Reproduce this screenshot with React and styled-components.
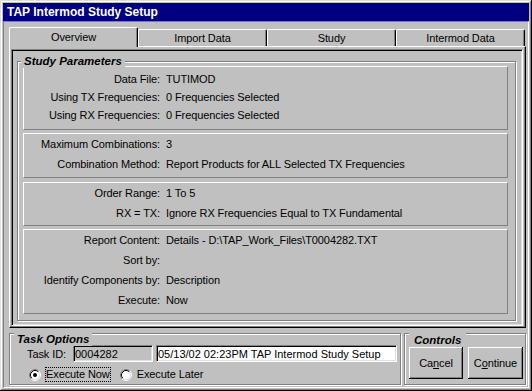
import React from "react";
import styled, { createGlobalStyle } from "styled-components";

const GlobalStyle = createGlobalStyle`
  html, body {
    margin: 0;
    padding: 0;
    background: #c0c0c0;
  }
  body {
    font-family: "Liberation Sans", Arial, sans-serif;
    font-size: 11px;
    color: #000;
  }
  * {
    box-sizing: border-box;
  }
`;

const Window = styled.div`
  width: 532px;
  height: 391px;
  padding: 3px;
  background: #c0c0c0;
  box-shadow: inset -1px -1px #000, inset 1px 1px #dfdfdf,
    inset -2px -2px #808080, inset 2px 2px #fff;
  display: flex;
  flex-direction: column;
`;

const TitleBar = styled.div`
  flex: none;
  height: 18px;
  padding-left: 4px;
  background: #000080;
  color: #fff;
  font-size: 12px;
  font-weight: bold;
  line-height: 18px;
  white-space: nowrap;
`;

const Body = styled.div`
  flex: 1;
  display: flex;
  flex-direction: column;
  border: 1px solid;
  border-color: #808080 #fff #fff #808080;
  padding: 5px 2px 2px 5px;
`;

const TabStrip = styled.div`
  position: relative;
  z-index: 1;
  display: flex;
  align-items: flex-end;
  height: 19px;
  margin-right: 1px;
`;

const Tab = styled.div`
  flex: 1;
  height: ${(p) => (p.$active ? 20 : 17)}px;
  margin-bottom: ${(p) => (p.$active ? -1 : 0)}px;
  border-top: 1px solid #fff;
  border-left: 1px solid #fff;
  border-right: 1px solid #000;
  border-radius: 2px 2px 0 0;
  box-shadow: inset -1px 0 #808080;
  background: #c0c0c0;
  text-align: center;
  line-height: ${(p) => (p.$active ? 19 : 16)}px;
  letter-spacing: -0.1px;
`;

const Page = styled.div`
  height: 282px;
  border: 1px solid;
  border-color: #fff #000 #000 #fff;
  box-shadow: inset -1px -1px #808080;
  padding: 2px 2px 1px 1px;
`;

const Panel = styled.div`
  height: 100%;
  border: 1px solid;
  border-color: #808080 #fff #fff #808080;
  box-shadow: inset 1px 1px #000, inset -1px -1px #dfdfdf;
  padding: 11px 6px 4px 5px;
`;

const Group = styled.div`
  position: relative;
  border: 1px solid #808080;
  box-shadow: inset 1px 1px #fff, 1px 1px #fff;
`;

const StudyGroup = styled(Group)`
  display: flex;
  flex-direction: column;
  gap: 3px;
  padding: 4px 7px 6px 5px;
`;

const Legend = styled.span`
  position: absolute;
  left: ${(p) => p.$x}px;
  top: ${(p) => p.$y}px;
  padding: 0 ${(p) => p.$pad ?? 3}px;
  background: #c0c0c0;
  font-size: 11.5px;
  font-style: italic;
  font-weight: bold;
  line-height: 14px;
  white-space: nowrap;
`;

const Section = styled.div`
  display: grid;
  grid-template-columns: 136px 1fr;
  grid-auto-rows: ${(p) => p.$rowH}px;
  column-gap: 6px;
  align-items: center;
  margin-top: ${(p) => p.$mt ?? 0}px;
  padding: ${(p) => p.$pt}px 0 ${(p) => p.$pb}px;
  border: 1px solid;
  border-color: #fff #808080 #808080 #fff;
  letter-spacing: -0.1px;
  white-space: nowrap;
`;

const FieldLabel = styled.div`
  text-align: right;
`;

const FieldValue = styled.div``;

const BottomRow = styled.div`
  display: flex;
  gap: 3px;
  height: 52px;
  margin-top: 5px;
`;

const TaskGroup = styled(Group)`
  width: 392px;
  padding: 11px 3px 1px 17px;
  display: flex;
  flex-direction: column;
  gap: 4px;
`;

const ControlsGroup = styled(Group)`
  flex: 1;
  display: flex;
  align-items: flex-start;
  gap: 5px;
  padding: 13px 2px 5px 4px;
`;

const TaskRow = styled.div`
  display: flex;
  align-items: center;
  height: 17px;
`;

const TaskLabel = styled.span`
  width: 46px;
  letter-spacing: -0.1px;
`;

const TextField = styled.input`
  width: ${(p) => p.$w}px;
  height: 17px;
  margin: 0 ${(p) => p.$mr ?? 0}px 0 0;
  padding: 0 0 0 1px;
  border: 1px solid;
  border-color: #808080 #fff #fff #808080;
  box-shadow: inset 1px 1px #000, inset -1px -1px #dfdfdf;
  background: ${(p) => (p.$disabled ? "#c0c0c0" : "#fff")};
  font-family: "Liberation Sans", Arial, sans-serif;
  font-size: 11px;
  color: #000;
  outline: none;
`;

const RadioRow = styled.div`
  display: flex;
  align-items: center;
  height: 17px;
  padding-left: 2px;
`;

const RadioOption = styled.label`
  display: inline-flex;
  align-items: center;
  gap: 5px;
  margin-right: ${(p) => p.$mr ?? 0}px;
  letter-spacing: -0.1px;
`;

const RadioText = styled.span`
  line-height: 13px;
  outline: ${(p) => (p.$focused ? "1px dotted #000" : "none")};
`;

const Button = styled.button`
  width: ${(p) => p.$w}px;
  height: 32px;
  padding: 0;
  border: none;
  background: #c0c0c0;
  box-shadow: inset -1px -1px #000, inset 1px 1px #fff,
    inset -2px -2px #808080;
  font-family: "Liberation Sans", Arial, sans-serif;
  font-size: 11px;
  letter-spacing: -0.1px;
  color: #000;
`;

const RadioMark = ({ checked }) => (
  <svg width="12" height="12" viewBox="0 0 12 12">
    <circle cx="6" cy="6" r="4.5" fill="#fff" />
    <path d="M2.11 9.89 A5.5 5.5 0 0 1 9.89 2.11" stroke="#808080" fill="none" />
    <path d="M9.89 2.11 A5.5 5.5 0 0 1 2.11 9.89" stroke="#fff" fill="none" />
    <path d="M2.82 9.18 A4.5 4.5 0 0 1 9.18 2.82" stroke="#000" fill="none" />
    <path d="M9.18 2.82 A4.5 4.5 0 0 1 2.82 9.18" stroke="#dfdfdf" fill="none" />
    {checked && <circle cx="6" cy="6" r="2" fill="#000" />}
  </svg>
);

const tabs = ["Overview", "Import Data", "Study", "Intermod Data"];

const sections = [
  {
    rowH: 18,
    pt: 3,
    pb: 5,
    rows: [
      ["Data File:", "TUTIMOD"],
      ["Using TX Frequencies:", "0 Frequencies Selected"],
      ["Using RX Frequencies:", "0 Frequencies Selected"],
    ],
  },
  {
    rowH: 20,
    pt: 0,
    pb: 3,
    rows: [
      ["Maximum Combinations:", "3"],
      ["Combination Method:", "Report Products for ALL Selected TX Frequencies"],
    ],
  },
  {
    rowH: 20,
    pt: 0,
    pb: 2,
    mt: 1,
    rows: [
      ["Order Range:", "1 To 5"],
      ["RX = TX:", "Ignore RX Frequencies Equal to TX Fundamental"],
    ],
  },
  {
    rowH: 20,
    pt: 0,
    pb: 3,
    rows: [
      ["Report Content:", "Details - D:\\TAP_Work_Files\\T0004282.TXT"],
      ["Sort by:", ""],
      ["Identify Components by:", "Description"],
      ["Execute:", "Now"],
    ],
  },
];

export default function App() {
  return (
    <>
      <GlobalStyle />
      <Window>
        <TitleBar>TAP Intermod Study Setup</TitleBar>
        <Body>
          <TabStrip>
            {tabs.map((t, i) => (
              <Tab key={t} $active={i === 0}>
                {t}
              </Tab>
            ))}
          </TabStrip>
          <Page>
            <Panel>
              <StudyGroup>
                <Legend $x={3} $y={-8}>
                  Study Parameters
                </Legend>
                {sections.map((s, i) => (
                  <Section key={i} $rowH={s.rowH} $pt={s.pt} $pb={s.pb} $mt={s.mt}>
                    {s.rows.map(([label, value]) => (
                      <React.Fragment key={label}>
                        <FieldLabel>{label}</FieldLabel>
                        <FieldValue>{value}</FieldValue>
                      </React.Fragment>
                    ))}
                  </Section>
                ))}
              </StudyGroup>
            </Panel>
          </Page>
          <BottomRow>
            <TaskGroup>
              <Legend $x={4} $y={-2}>
                Task Options
              </Legend>
              <TaskRow>
                <TaskLabel>Task ID:</TaskLabel>
                <TextField $w={80} $mr={3} $disabled readOnly defaultValue="0004282" />
                <TextField
                  $w={241}
                  readOnly
                  defaultValue="05/13/02 02:23PM TAP Intermod Study Setup"
                />
              </TaskRow>
              <RadioRow>
                <RadioOption $mr={10}>
                  <RadioMark checked />
                  <RadioText $focused>Execute Now</RadioText>
                </RadioOption>
                <RadioOption>
                  <RadioMark />
                  <RadioText>Execute Later</RadioText>
                </RadioOption>
              </RadioRow>
            </TaskGroup>
            <ControlsGroup>
              <Legend $x={4} $y={-1} $pad={5}>
                Controls
              </Legend>
              <Button $w={54}>
                Ca<u>n</u>cel
              </Button>
              <Button $w={55}>
                C<u>o</u>ntinue
              </Button>
            </ControlsGroup>
          </BottomRow>
        </Body>
      </Window>
    </>
  );
}
